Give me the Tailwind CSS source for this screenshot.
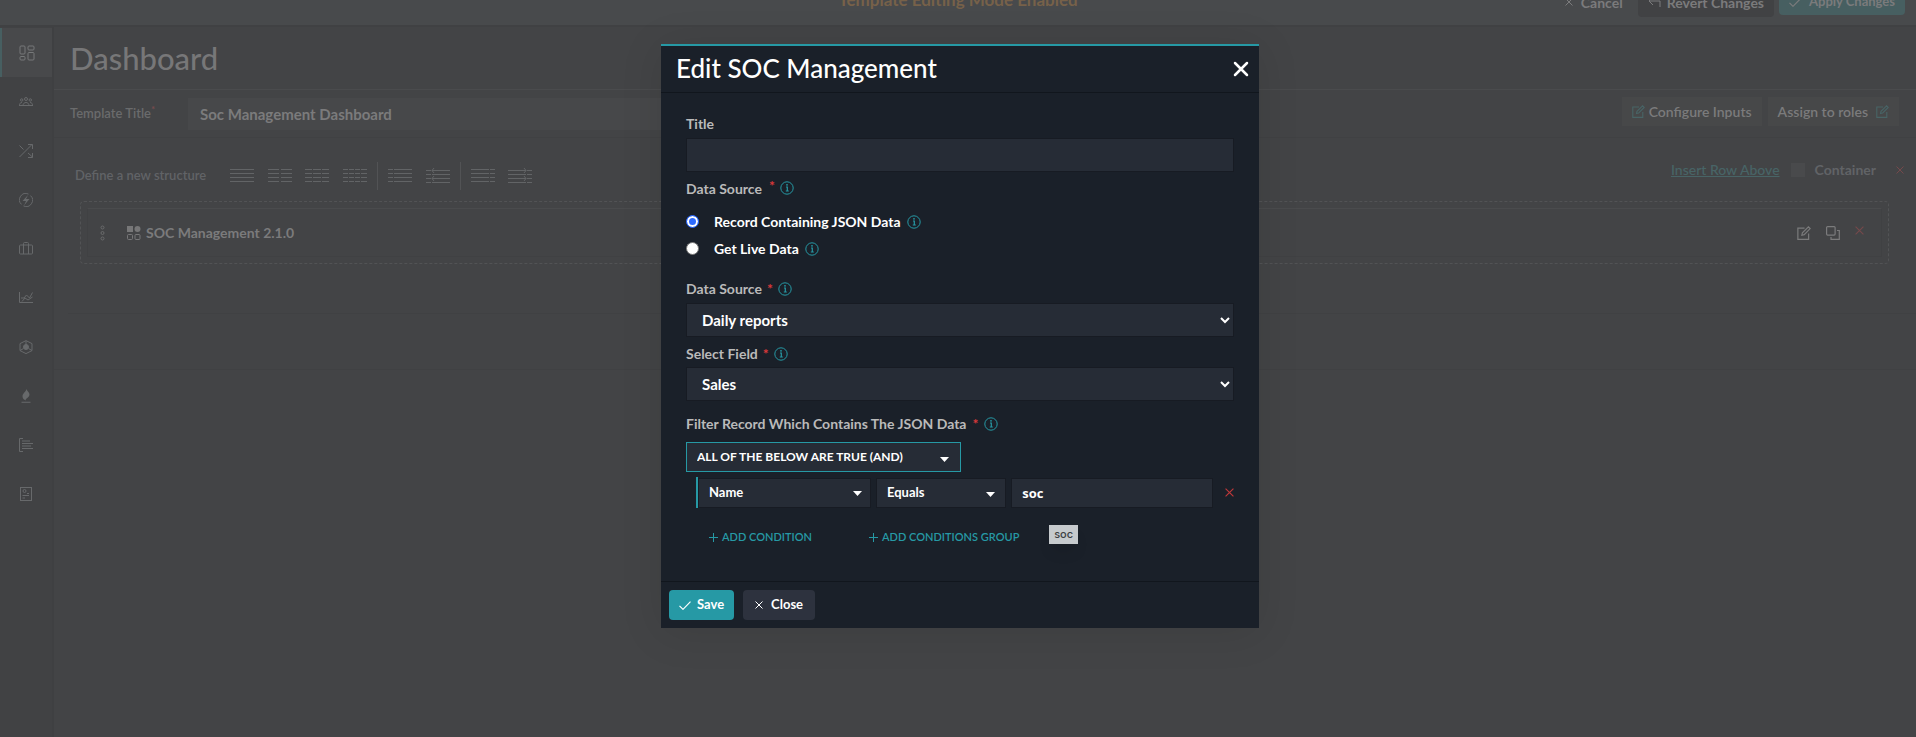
<!DOCTYPE html>
<html lang="en">
<head>
<meta charset="utf-8">
<meta name="viewport" content="width=device-width, initial-scale=1">
<title>Edit SOC Management</title>
<script src="https://cdn.jsdelivr.net/npm/@tailwindcss/browser@4"></script>
</head>
<body class="relative flex min-h-screen flex-col bg-[#434446] font-['Lato','Liberation_Sans',sans-serif] text-[14px] font-bold text-[#7b7b7c]">

<svg class="hidden" aria-hidden="true">
  <symbol id="info" viewBox="0 0 14 14"><circle cx="7" cy="7" r="6.2" fill="none" stroke="currentColor" stroke-width="1"/><path d="M6 6h1.3v4M5.8 10h3" fill="none" stroke="currentColor" stroke-width="1.2"/><circle cx="7" cy="3.8" r=".9" fill="currentColor"/></symbol>
  <symbol id="x" viewBox="0 0 8 8"><path d="M.5.5l7 7M7.5.5l-7 7" fill="none" stroke="currentColor" stroke-width="1"/></symbol>
  <symbol id="edit" viewBox="0 0 13 13"><path d="M7 2H.8v10.4h10V7M4.5 8.6l.5-2.2L10.6.8l1.6 1.6-5.5 5.6z" fill="none" stroke="currentColor" stroke-width="1.1"/></symbol>
  <symbol id="plus" viewBox="0 0 9 9"><path d="M4.5 0v9M0 4.500h9" fill="none" stroke="currentColor" stroke-width="1"/></symbol>
  <symbol id="check" viewBox="0 0 12 9"><path d="M.5 4.800l3.500 3.500L11.500.7" fill="none" stroke="currentColor" stroke-width="1.200"/></symbol>
</svg>

<header class="flex h-[27px] items-end justify-end gap-[5px] overflow-hidden border-b-2 border-[#404143] bg-[#484a4c] pr-[11px] pb-2">
  <p class="absolute inset-x-0 -top-3 text-center text-[17px] leading-6 text-[#776149]">Template Editing Mode Enabled</p>
  <button class="flex h-[30px] items-center gap-2 px-[10px]"><svg class="size-2"><use href="#x"/></svg>Cancel</button>
  <button class="flex h-[30px] items-center gap-[6px] rounded-sm bg-[#414244] px-[10px]"><svg class="h-3 w-[13px]" viewBox="0 0 13 12" fill="none" stroke="currentColor"><path d="M5 1L1 5l4 4M1 5h11v6"/></svg>Revert Changes</button>
  <button class="mb-[2px] flex h-[26px] items-center gap-2 rounded-sm bg-[#475f61] px-[10px] text-[13px]"><svg class="h-[9px] w-3"><use href="#check"/></svg>Apply Changes</button>
</header>

<div class="flex flex-1">
  <nav class="w-[54px] shrink-0 border-r-2 border-[#3f4042] bg-[#414244] pt-px text-[#67696b]" aria-label="Main">
    <a href="#" class="flex h-[49px] w-[52px] items-center justify-center border-l-2 border-[#475f61] bg-[#48494b]" aria-label="Dashboards"><svg class="size-4" viewBox="0 0 16 16" fill="none" stroke="#77797a"><rect x="1" y="1" width="5" height="8" rx="1"/><rect x="9" y="1" width="6" height="4" rx="1"/><rect x="1" y="11.500" width="5" height="3.500" rx="1"/><rect x="9" y="7.500" width="6" height="7.500" rx="1"/></svg></a>
    <a href="#" class="flex h-[49px] items-center justify-center" aria-label="Teams"><svg class="h-[10px] w-[14px]" viewBox="0 0 14 10" fill="none" stroke="currentColor"><circle cx="7" cy="2" r="1.500"/><circle cx="2.700" cy="3" r="1.200"/><circle cx="11.300" cy="3" r="1.200"/><path d="M4 8.500c0-4 6-4 6 0zM.5 8.500c0-2 .8-3 2.500-3M13.500 8.500c0-2-.8-3-2.500-3M0 8.500h14"/></svg></a>
    <a href="#" class="flex h-[49px] items-center justify-center" aria-label="Playbooks"><svg class="size-[14px]" viewBox="0 0 14 14" fill="none" stroke="currentColor"><path d="M.5 13L13 .5M9 .5h4.500V5M.5 1.500l4 4M9 9l4.500 4M13.500 9v4.500H9"/></svg></a>
    <a href="#" class="flex h-[49px] items-center justify-center" aria-label="Automation"><svg class="size-[14px]" viewBox="0 0 14 14" fill="none" stroke="currentColor"><path d="M9.500 1.100A6.300 6.300 0 0 0 2.500 11.400M4.500 12.900A6.300 6.300 0 0 0 11.500 2.600"/><path d="M9 2L3.500 8H7l-2 4.500L10.500 6H7z" fill="currentColor" stroke="none"/></svg></a>
    <a href="#" class="flex h-[49px] items-center justify-center" aria-label="Cases"><svg class="h-[13px] w-[14px]" viewBox="0 0 14 13" fill="none" stroke="currentColor"><rect x=".5" y="3" width="13" height="9" rx="1"/><path d="M4.500 12V1.500a1 1 0 0 1 1-1h3a1 1 0 0 1 1 1V12"/></svg></a>
    <a href="#" class="flex h-[49px] items-center justify-center" aria-label="Metrics"><svg class="h-[11px] w-[14px]" viewBox="0 0 14 11" fill="none" stroke="currentColor"><path d="M.5 0v10.500H14M2 6h3l2.500-3 3 3L13.500.5M3 9.500L6 6l3 2 4.500-3"/></svg></a>
    <a href="#" class="flex h-[49px] items-center justify-center" aria-label="Resources"><svg class="size-[14px]" viewBox="0 0 14 14" fill="none" stroke="currentColor"><path d="M7 .6l6 3v7l-6 3-6-3v-7zM7 1v4M4.500 8.500L1 10.500M9.500 8.500L13 10.500"/><circle cx="7" cy="7" r="2.500" fill="currentColor"/></svg></a>
    <a href="#" class="flex h-[49px] items-center justify-center" aria-label="Threats"><svg class="h-[14px] w-[10px]" viewBox="0 0 10 14" fill="currentColor"><path d="M5.500 0C5 3 1.500 4 1.500 7.500c0 2 1.500 3 3.200 4C4 9.500 8.500 8.500 8.500 5.500 8.500 3 6 2.500 5.500 0zM.5 12.800h9v1H.5z"/></svg></a>
    <a href="#" class="flex h-[49px] items-center justify-center" aria-label="Logs"><svg class="size-[14px]" viewBox="0 0 14 14" fill="none" stroke="currentColor"><path d="M4 .5H.5v13H4M3 3h8M3 5.500h11M3 8h9M3 10.500h11"/></svg></a>
    <a href="#" class="flex h-[49px] items-center justify-center" aria-label="Reports"><svg class="h-[14px] w-3" viewBox="0 0 12 14" fill="none" stroke="currentColor"><rect x=".5" y=".5" width="11" height="13"/><circle cx="4.500" cy="4" r="1.500"/><path d="M2.500 8.500H9M2.500 11H5M7 6.500h2"/></svg></a>
  </nav>

  <main class="min-w-0 flex-1">
    <h1 class="flex h-[63px] items-center border-b border-[#4a4b4d] pl-4 text-[31px] font-medium text-[#777778]">Dashboard</h1>

    <section class="flex h-12 items-center gap-[6px] border-b border-[#404143] pr-[17px] pl-4">
      <label for="tpl" class="w-28 text-[13px] font-semibold text-[#6a6b6c]">Template Title<sup class="text-[#7a4c4e]">*</sup></label>
      <input id="tpl" class="h-8 w-2/5 bg-[#47484a] px-3 text-[15px]" value="Soc Management Dashboard">
      <button class="mb-1 ml-auto flex h-[29px] items-center gap-1 bg-[#474849] px-[10px] font-semibold"><svg class="size-[13px] text-[#486466]"><use href="#edit"/></svg>Configure Inputs</button>
      <button class="mb-1 flex h-[29px] items-center gap-2 bg-[#474849] px-[10px] font-semibold">Assign to roles<svg class="size-[13px] text-[#486466]"><use href="#edit"/></svg></button>
    </section>

    <section class="border-b border-[#404143] pb-[55px]">
      <div class="flex h-[63px] items-center pr-3 pl-[21px] text-[#616366]">
        <span class="mt-[13px] text-[13px] font-semibold">Define a new structure</span>
        <div class="mt-[13px] ml-6 flex items-center">
          <svg class="h-7 w-[310px]" viewBox="0 0 310 28" fill="none" stroke="#626466">
            <path d="M0 7.500h24M0 11.500h24M0 15.500h24M0 19.500h24"/>
            <path d="M38 7.500h11m2 0h11M38 11.500h11m2 0h11M38 15.500h11m2 0h11M38 19.500h11m2 0h11"/>
            <path d="M75 7.500h7m1 0h8m1 0h7M75 11.500h7m1 0h8m1 0h7M75 15.500h7m1 0h8m1 0h7M75 19.500h7m1 0h8m1 0h7"/>
            <path d="M113 7.500h5m1 0h5m1 0h5m1 0h6M113 11.500h5m1 0h5m1 0h5m1 0h6M113 15.500h5m1 0h5m1 0h5m1 0h6M113 19.500h5m1 0h5m1 0h5m1 0h6"/>
            <path d="M147.500 0v28M230.500 0v28" stroke="#525355"/>
            <path d="M158 7.500h5m1 0h18M158 11.500h5m1 0h18M158 15.500h5m1 0h18M158 19.500h5m1 0h18"/>
            <path d="M196 8.500h5m1 0h18M196 12.500h5m1 0h18M196 16.500h5m1 0h18M196 20.500h5m1 0h18M204 6l-2 2.500 2 2.500M204 14l-2 2.500 2 2.500"/>
            <path d="M241 7.500h18m1 0h5M241 11.500h18m1 0h5M241 15.500h18m1 0h5M241 19.500h18m1 0h5"/>
            <path d="M278 8.500h18m1 0h5M278 12.500h18m1 0h5M278 16.500h18m1 0h5M278 20.500h18m1 0h5M294 6l2 2.500-2 2.500M294 14l2 2.500-2 2.500"/>
          </svg>
        </div>
        <div class="ml-auto flex items-center">
          <a href="#" class="font-medium text-[#486466] underline">Insert Row Above</a>
          <input id="cont" type="checkbox" class="ml-[11px] size-[14px] appearance-none bg-[#494a4c]">
          <label for="cont" class="ml-[10px]">Container</label>
          <button class="ml-[20px] text-[#75494b]" aria-label="Remove row"><svg class="size-2"><use href="#x"/></svg></button>
        </div>
      </div>
      <div class="mr-[27px] ml-[26px] rounded-sm border border-dashed border-[#525355] p-[6px]">
        <div class="flex h-[49px] items-center border border-t-[#4a4b4d] border-r-[#404143] border-b-[#404143] border-l-[#404143] pr-[17px] pl-3">
          <svg class="h-4 w-[5px]" viewBox="0 0 5 16" fill="none" stroke="#6a6b6c"><circle cx="2.500" cy="2.500" r="1.500"/><circle cx="2.500" cy="8" r="1.500"/><circle cx="2.500" cy="13.500" r="1.500"/></svg>
          <svg class="ml-[22px] size-[14px]" viewBox="0 0 14 14"><rect width="6" height="6" fill="#777778"/><circle cx="10.500" cy="3" r="3" fill="#777778"/><rect x=".5" y="8.500" width="5" height="5" rx="1" fill="none" stroke="#777778"/><rect x="8" y="8.500" width="5" height="5" rx="1" fill="none" stroke="#777778"/></svg>
          <h2 class="ml-[5px]">SOC Management 2.1.0</h2>
          <div class="ml-auto flex items-center gap-[15px]">
            <button aria-label="Edit widget"><svg class="size-[14px]"><use href="#edit"/></svg></button>
            <button aria-label="Clone widget"><svg class="size-[14px]" viewBox="0 0 14 14" fill="none" stroke="currentColor" stroke-width="1.200"><rect x=".6" y=".6" width="8.500" height="8.500" rx="1"/><path d="M11 4.500h2.300v8.800H5V11"/></svg></button>
            <button class="mb-1 text-[#75494b]" aria-label="Delete widget"><svg class="size-[9px]"><use href="#x"/></svg></button>
          </div>
        </div>
      </div>
      <hr class="mt-[49px] ml-[14px] border-[#404143]">
    </section>
  </main>
</div>

<div role="dialog" aria-labelledby="dlg" class="absolute top-11 left-1/2 ml-[2px] w-[598px] -translate-x-1/2 border-t-2 border-[#2699a5] bg-[#1a2029] text-white shadow-[0_4px_40px_rgba(0,0,0,0.1)]">
  <header class="flex h-[47px] items-center justify-between border-b border-[#11161d] pr-[10px] pb-px pl-[15px]">
    <h2 id="dlg" class="text-[26px] font-medium">Edit SOC Management</h2>
    <button aria-label="Close dialog"><svg class="size-4" viewBox="0 0 16 16" stroke="#fff" stroke-width="2.500" stroke-linecap="round"><path d="M2 2l12 12M14 2L2 14"/></svg></button>
  </header>

  <form class="px-[25px] pt-[21px] pb-[34px]">
    <label for="title" class="block h-6 leading-5 text-[#bababa]">Title</label>
    <input id="title" class="block h-[34px] w-full border border-[#171b23] bg-[#262c36] px-4">

    <fieldset class="pt-[6px]">
      <legend class="sr-only">Data Source</legend>
      <div class="flex h-5 items-center text-[#bababa]">Data Source<span class="mb-1 ml-[7px] leading-none text-[#d9383a]">*</span><svg class="ml-[5px] size-[14px] text-[#2699a5]"><use href="#info"/></svg></div>
      <div class="mt-[10px] flex h-[27px] items-center">
        <input id="r1" type="radio" name="src" checked class="size-[13px] appearance-none rounded-full border border-[#2e6bff] bg-[#2e6bff] shadow-[inset_0_0_0_2px_#fff]">
        <label for="r1" class="ml-[15px]">Record Containing JSON Data</label><svg class="ml-[6px] size-[14px] text-[#2699a5]"><use href="#info"/></svg>
      </div>
      <div class="flex h-[27px] items-center">
        <input id="r2" type="radio" name="src" class="size-[13px] appearance-none rounded-full border border-[#767676] bg-white">
        <label for="r2" class="ml-[15px]">Get Live Data</label><svg class="ml-[6px] size-[14px] text-[#2699a5]"><use href="#info"/></svg>
      </div>
    </fieldset>

    <div class="mt-[14px] flex h-[25px] items-center text-[#bababa]"><label for="ds">Data Source</label><span class="ml-[5px] leading-none text-[#d9383a]">*</span><svg class="ml-[5px] size-[14px] text-[#2699a5]"><use href="#info"/></svg></div>
    <div class="relative mt-[2px]">
      <select id="ds" class="block h-[34px] w-full appearance-none border border-[#171b23] bg-[#262c36] px-[15px] text-[15px]"><option>Daily reports</option></select>
      <svg class="pointer-events-none absolute top-[14px] right-1 h-[7px] w-[10px]" viewBox="0 0 10 7" fill="none" stroke="#fff" stroke-width="2"><path d="M1 1l4 4 4-4"/></svg>
    </div>

    <div class="mt-1 flex h-[25px] items-center text-[#bababa]"><label for="fld">Select Field</label><span class="ml-[5px] leading-none text-[#d9383a]">*</span><svg class="ml-[5px] size-[14px] text-[#2699a5]"><use href="#info"/></svg></div>
    <div class="relative mt-[1px]">
      <select id="fld" class="block h-[34px] w-full appearance-none border border-[#171b23] bg-[#262c36] px-[15px] text-[15px]"><option>Sales</option></select>
      <svg class="pointer-events-none absolute top-[14px] right-1 h-[7px] w-[10px]" viewBox="0 0 10 7" fill="none" stroke="#fff" stroke-width="2"><path d="M1 1l4 4 4-4"/></svg>
    </div>

    <div class="mt-[10px] flex h-[25px] items-center text-[#bababa]"><label for="logic">Filter Record Which Contains The JSON Data</label><span class="ml-[6px] leading-none text-[#d9383a]">*</span><svg class="ml-[6px] size-[14px] text-[#2699a5]"><use href="#info"/></svg></div>
    <div class="relative mt-[6px] w-[275px]">
      <select id="logic" class="block h-[30px] w-full appearance-none border border-[#2699a5] bg-[#262c36] px-[10px] text-[12px]"><option>ALL OF THE BELOW ARE TRUE (AND)</option></select>
      <svg class="pointer-events-none absolute top-[15px] right-3 h-[5px] w-[9px]" viewBox="0 0 9 5" fill="#fff"><path d="M0 0h9L4.500 5z"/></svg>
    </div>

    <div class="mt-[5px] ml-[10px] flex h-[31px] items-center border-l-2 border-[#2699a5] text-[13px]">
      <div class="relative w-[174px]">
        <select aria-label="Field" class="block h-[30px] w-full appearance-none border border-[#171b23] bg-[#262c36] px-[10px]"><option>Name</option></select>
        <svg class="pointer-events-none absolute top-[13px] right-[9px] h-[5px] w-[9px]" viewBox="0 0 9 5" fill="#fff"><path d="M0 0h9L4.500 5z"/></svg>
      </div>
      <div class="relative ml-[5px] w-[131px]">
        <select aria-label="Operator" class="block h-[30px] w-full appearance-none border border-[#171b23] bg-[#262c36] px-[10px]"><option>Equals</option></select>
        <svg class="pointer-events-none absolute top-[14px] right-[11px] h-[5px] w-[9px]" viewBox="0 0 9 5" fill="#fff"><path d="M0 0h9L4.500 5z"/></svg>
      </div>
      <div class="relative ml-[5px] w-[203px]">
        <input aria-label="Value" value="soc" class="block h-[30px] w-full border border-[#171b23] bg-[#262c36] px-[10px] font-['Open_Sans','Noto_Sans',sans-serif]">
        <div role="tooltip" class="absolute top-[47px] left-[38px] bg-[#c6cacd] px-[5px] font-['Inter','Liberation_Sans',sans-serif] text-[11px] leading-[19px] font-medium text-[#3c3f43] shadow-lg">soc</div>
      </div>
      <button type="button" class="ml-[12px] text-[#c2383a]" aria-label="Remove condition"><svg class="size-[9px]"><use href="#x"/></svg></button>
    </div>

    <div class="mt-[19px] ml-[23px] flex h-5 items-center gap-[57px] text-[11px] font-semibold text-[#2699a5]">
      <button type="button" class="flex items-center gap-1"><svg class="size-[9px]"><use href="#plus"/></svg>ADD CONDITION</button>
      <button type="button" class="flex items-center gap-1"><svg class="size-[9px]"><use href="#plus"/></svg>ADD CONDITIONS GROUP</button>
    </div>
  </form>

  <footer class="flex items-center gap-[9px] border-t border-[#11161d] p-2">
    <button class="flex h-[30px] items-center gap-[6px] rounded-sm bg-[#2699a5] px-[10px] text-[13px]"><svg class="h-[9px] w-3"><use href="#check"/></svg>Save</button>
    <button class="flex h-[30px] items-center gap-2 rounded-sm bg-[#2d323e] px-3 text-[13px]"><svg class="size-2"><use href="#x"/></svg>Close</button>
  </footer>
</div>
</body>
</html>
